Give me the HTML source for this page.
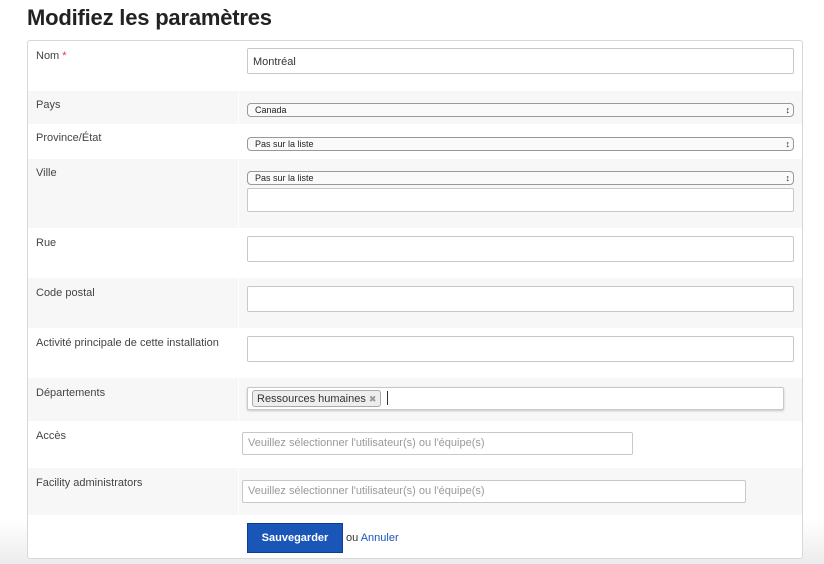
<!DOCTYPE html>
<html><head><meta charset="utf-8"><style>
*{box-sizing:border-box;margin:0;padding:0}
body{width:824px;height:564px;background:#fff;font-family:"Liberation Sans",sans-serif;color:#333;position:relative;overflow:hidden}
.bgfade{position:absolute;left:0;right:0;top:520px;height:44px;background:linear-gradient(#fff,#ececec)}
h1{position:absolute;left:27px;top:5px;font-size:22px;font-weight:bold;color:#222;letter-spacing:-0.2px}
.panel{position:absolute;left:27px;top:40px;width:776px;height:519px;border:1px solid #d8d8d8;border-radius:3px;background:#fff;overflow:hidden}
.row{position:absolute;left:0;right:0}
.g{background:#f7f7f7}
.g::after{content:"";position:absolute;left:210px;top:0;bottom:0;width:1px;background:#fff}
.lbl{position:absolute;left:8px;font-size:11px;color:#444}
.in{position:absolute;border:1px solid #c8c8c8;background:#fff;border-radius:2px}
.sel{position:absolute;left:219px;width:547px;height:14px;border:1px solid #999;border-radius:4px;background:#fafafa;font-size:9px;padding-left:7px;line-height:12px;color:#222}
.sel::after{content:"\2195";position:absolute;right:3px;top:0;font-size:9px}
.ph{font-size:11px;color:#999;padding-left:5px;line-height:21px}
</style></head><body>
<div class="bgfade"></div>
<h1>Modifiez les paramètres</h1>
<div class="panel">
 <div class="row" style="top:0;height:50px"><div class="lbl" style="top:9px">Nom<span style="color:#e33"> *</span></div>
  <div class="in" style="left:219px;top:7px;width:547px;height:26px;font-size:11px;color:#333;padding:7px 5px">Montréal</div></div>
 <div class="row g" style="top:50px;height:33px"><div class="lbl" style="top:8px">Pays</div><div class="sel" style="top:12px">Canada</div></div>
 <div class="row" style="top:83px;height:35px"><div class="lbl" style="top:8px">Province/État</div><div class="sel" style="top:13px">Pas sur la liste</div></div>
 <div class="row g" style="top:118px;height:69px"><div class="lbl" style="top:8px">Ville</div><div class="sel" style="top:12px">Pas sur la liste</div>
  <div class="in" style="left:219px;top:29px;width:547px;height:24px"></div></div>
 <div class="row" style="top:187px;height:50px"><div class="lbl" style="top:9px">Rue</div><div class="in" style="left:219px;top:8px;width:547px;height:26px"></div></div>
 <div class="row g" style="top:237px;height:50px"><div class="lbl" style="top:9px">Code postal</div><div class="in" style="left:219px;top:8px;width:547px;height:26px"></div></div>
 <div class="row" style="top:287px;height:50px"><div class="lbl" style="top:9px">Activité principale de cette installation</div><div class="in" style="left:219px;top:8px;width:547px;height:26px"></div></div>
 <div class="row g" style="top:337px;height:43px"><div class="lbl" style="top:9px">Départements</div>
  <div class="in" style="left:219px;top:9px;width:537px;height:23px;box-shadow:0 1px 2px rgba(0,0,0,.2)">
   <div style="position:absolute;left:4px;top:2px;height:17px;border:1px solid #aaa;border-radius:3px;background:#eee;font-size:11px;color:#333;padding:1px 4px;line-height:14px">Ressources humaines <span style="color:#999;font-size:9px">✖</span></div>
   <div style="position:absolute;left:139px;top:3px;width:1px;height:14px;background:#333"></div></div></div>
 <div class="row" style="top:380px;height:47px"><div class="lbl" style="top:9px">Accès</div><div class="in ph" style="left:214px;top:11px;width:391px;height:23px">Veuillez sélectionner l'utilisateur(s) ou l'équipe(s)</div></div>
 <div class="row g" style="top:427px;height:47px"><div class="lbl" style="top:9px">Facility administrators</div><div class="in ph" style="left:214px;top:12px;width:504px;height:23px">Veuillez sélectionner l'utilisateur(s) ou l'équipe(s)</div></div>
 <div class="row" style="top:474px;height:45px">
  <div style="position:absolute;left:219px;top:8px;width:96px;height:30px;background:#1a56b8;border:1px solid #0f3d8a;color:#fff;font-size:11px;font-weight:bold;text-align:center;line-height:28px">Sauvegarder</div>
  <div style="position:absolute;left:318px;top:17px;font-size:11px;color:#333">ou <span style="color:#1a56b8">Annuler</span></div></div>
</div>
</body></html>
